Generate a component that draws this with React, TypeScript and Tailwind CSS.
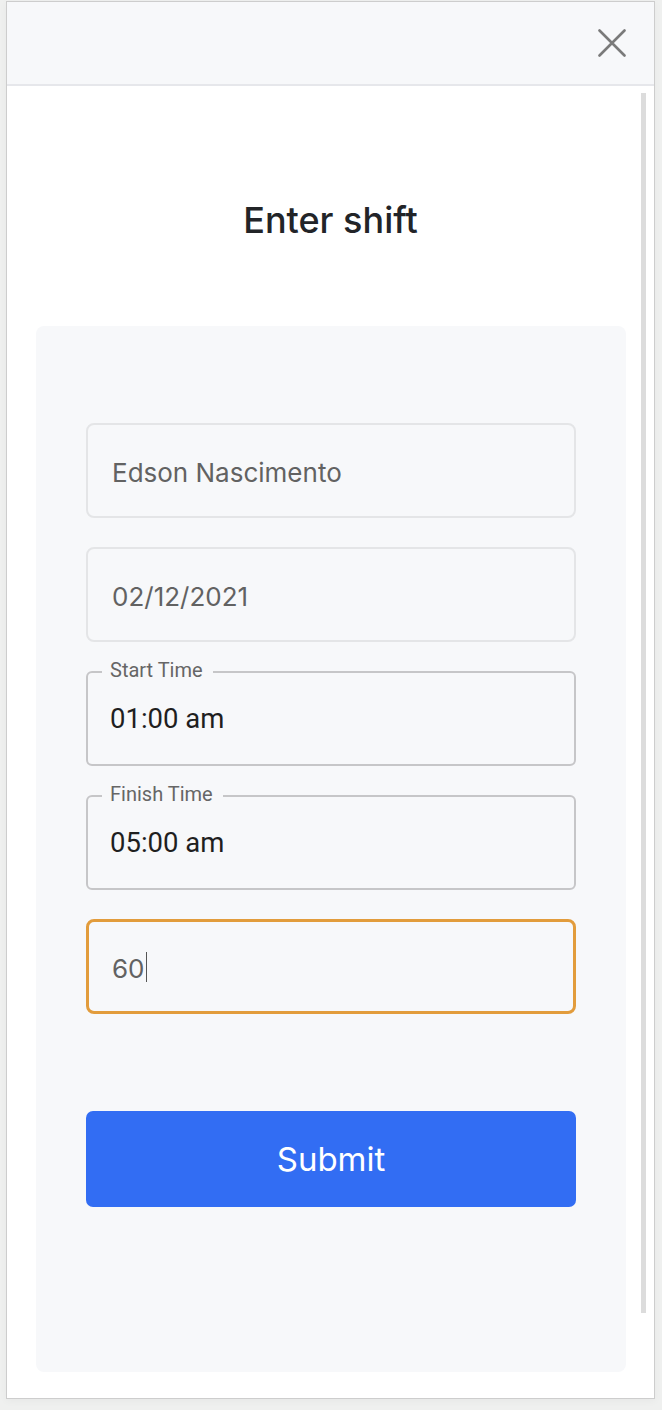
import React from "react";

function PlainField({ value, focused }: { value: string; focused?: boolean }) {
  return (
    <div
      className={
        "h-[95px] rounded-[8px] flex items-center bg-[#f7f8fa] " +
        (focused ? "border-[3px] border-[#e29c3c] pl-[23px]" : "border-2 border-[#e4e5e7] pl-[24px]")
      }
    >
      <span className="text-[26px] leading-[32px] text-[#626262] pt-[5px] flex items-center [font-family:Inter,'Noto_Sans',sans-serif]">
        {value}
        {focused && <span className="inline-block w-[1.5px] h-[30px] bg-[#555] ml-[1px] -mt-[4px]" />}
      </span>
    </div>
  );
}

function OutlinedField({ label, value }: { label: string; value: string }) {
  return (
    <div className="relative h-[95px] rounded-[6px] border-2 border-[#c6c6c8] flex items-center pl-[22px] bg-[#f7f8fa]">
      <span className="absolute left-[14px] -top-[13px] px-[8px] pr-[10px] bg-[#f7f8fa] text-[20px] leading-[20px] text-[#666] [font-family:Roboto,sans-serif]">
        {label}
      </span>
      <span className="text-[27.5px] leading-[32px] text-[#1f1f1f] [font-family:Roboto,sans-serif] pt-[1px]">
        {value}
      </span>
    </div>
  );
}

export default function App() {
  return (
    <div className="w-[662px] h-[1410px] bg-[#eff0ef] pt-[1px] pl-[6px] [font-family:Inter,sans-serif]">
      <div className="w-[649px] h-[1398px] border border-[#cdcdcd] bg-white flex flex-col shadow-[0_2px_8px_rgba(0,0,0,0.04)]">
        <div className="h-[84px] shrink-0 bg-[#f7f8fa] border-b-2 border-[#e6e7eb] flex items-center justify-end pr-[28px]">
          <svg width="28" height="28" viewBox="0 0 28 28" fill="none" className="-mt-[1px]">
            <path d="M1.5 1.5 L26.5 26.5 M26.5 1.5 L1.5 26.5" stroke="#7a7a7a" strokeWidth="2.6" strokeLinecap="round" />
          </svg>
        </div>
        <div className="relative flex-1 flex flex-col">
          <div className="absolute right-[8px] top-[7px] w-[5px] h-[1220px] bg-[#dcdcdc]" />
          <h1 className="pt-[112px] text-center text-[36px] leading-[44px] font-medium text-[#222428]">
            Enter shift
          </h1>
          <div className="mt-[84px] ml-[29px] w-[590px] h-[1046px] rounded-[8px] bg-[#f7f8fa] px-[50px] pt-[97px] flex flex-col">
            <div className="flex flex-col gap-[29px]">
              <PlainField value="Edson Nascimento" />
              <PlainField value="02/12/2021" />
              <OutlinedField label="Start Time" value="01:00 am" />
              <OutlinedField label="Finish Time" value="05:00 am" />
              <PlainField value="60" focused />
            </div>
            <button className="mt-[97px] h-[96px] w-full rounded-[7px] bg-[#326df3] text-white text-[33px] leading-[40px] font-normal">
              Submit
            </button>
          </div>
        </div>
      </div>
    </div>
  );
}
